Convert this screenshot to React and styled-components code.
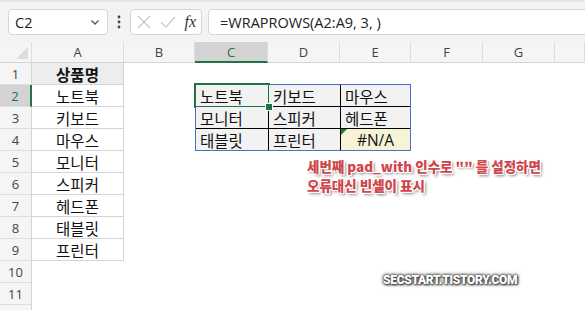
import React from "react";
import styled, { createGlobalStyle } from "styled-components";

const Global = createGlobalStyle`
  html, body { margin: 0; padding: 0; background: #fff; }
  body { width: 585px; height: 310px; overflow: hidden; font-family: "Noto Sans", "Noto Sans CJK KR", sans-serif; }
`;

const Page = styled.div`
  position: relative;
  width: 585px;
  height: 310px;
  overflow: hidden;
  background: #fff;
`;

const Toolbar = styled.div`
  display: flex;
  align-items: center;
  height: 42px;
  box-sizing: border-box;
  padding: 8px 0 8px 8px;
  background: #f3f3f3;
  border-top: 2px solid #e6e6e6;
`;

const Box = styled.div`
  display: flex;
  align-items: center;
  height: 26px;
  box-sizing: border-box;
  background: #fff;
  border: 1px solid #d6d6d6;
  border-radius: 4px;
  width: ${(p) => p.$w || "auto"};
  flex: ${(p) => (p.$grow ? 1 : "none")};
  padding: 0 ${(p) => p.$pad || 6}px;
  margin-right: ${(p) => (p.$grow ? "-20px" : `${p.$mr || 0}px`)};
`;

const NameText = styled.span`
  flex: 1;
  font-family: "Open Sans", sans-serif;
  font-size: 14.5px;
  color: #222;
`;

const FormulaText = styled.span`
  font-family: "Open Sans", sans-serif;
  font-size: 14.5px;
  color: #222;
  padding-left: 5px;
`;

const Dots = styled.div`
  width: 22px;
  display: flex;
  justify-content: center;
`;

const Fx = styled.span`
  font-family: "Liberation Serif", serif;
  font-style: italic;
  font-size: 16px;
  color: #333;
  margin-left: auto;
`;

const Sheet = styled.div`
  display: grid;
  grid-template-columns: 32px 92px 71px 73px 72px 71px 72px 72px 1fr;
  grid-template-rows: 21px repeat(12, 22px);
`;

const ColHead = styled.div`
  grid-row: 1;
  grid-column: ${(p) => p.$c};
  display: flex;
  align-items: center;
  justify-content: center;
  box-sizing: border-box;
  background: ${(p) => (p.$sel ? "#d3d3d3" : "#f5f5f5")};
  border-right: 1px solid #dcdcdc;
  border-bottom: ${(p) => (p.$sel ? "2px solid #217346" : "1px solid #d4d4d4")};
  color: ${(p) => (p.$sel ? "#217346" : "#444")};
  font-family: "Open Sans", sans-serif;
  font-size: 13px;
  position: relative;
`;

const Corner = styled(ColHead)`
  &::after {
    content: "";
    position: absolute;
    right: 3px;
    bottom: 3px;
    border-style: solid;
    border-width: 0 0 12px 12px;
    border-color: transparent transparent #dcdcdc transparent;
  }
`;

const RowHead = styled.div`
  grid-column: 1;
  grid-row: ${(p) => p.$r};
  display: flex;
  align-items: center;
  justify-content: center;
  box-sizing: border-box;
  background: ${(p) => (p.$sel ? "#d3d3d3" : "#f5f5f5")};
  border-bottom: 1px solid #dcdcdc;
  border-right: ${(p) => (p.$sel ? "2px solid #217346" : "1px solid #d4d4d4")};
  color: ${(p) => (p.$sel ? "#217346" : "#444")};
  font-family: "Open Sans", sans-serif;
  font-size: 13px;
`;

const ListBlock = styled.div`
  grid-column: 2;
  grid-row: 2 / 11;
  display: grid;
  grid-template-rows: repeat(9, minmax(0, 1fr));
  gap: 1px;
  background: #d4d4d4;
  border-right: 1px solid #d4d4d4;
  border-bottom: 1px solid #d4d4d4;
  min-height: 0;
`;

const ListCell = styled.div`
  display: flex;
  align-items: center;
  justify-content: center;
  min-height: 0;
  overflow: visible;
  background: ${(p) => (p.$head ? "#ededed" : "#fff")};
  font-family: "Noto Sans CJK KR", sans-serif;
  font-weight: ${(p) => (p.$head ? 700 : 400)};
  font-size: 15.5px;
  line-height: 18px;
  color: #111;
`;

const OutBlock = styled.div`
  grid-column: 4 / 7;
  grid-row: 3 / 6;
  margin-top: -1px;
  min-height: 0;
  display: grid;
  grid-template-columns: 72px 71px 1fr;
  grid-template-rows: repeat(3, minmax(0, 1fr));
  gap: 1px;
  background: #000;
  border: 1px solid #4472c4;
`;

const OutCell = styled.div`
  position: relative;
  display: flex;
  align-items: center;
  min-height: 0;
  justify-content: ${(p) => (p.$err ? "center" : "flex-start")};
  padding-left: ${(p) => (p.$err ? 0 : 4)}px;
  background: ${(p) => (p.$err ? "#f6f3d6" : "#f2f2f2")};
  font-family: ${(p) => (p.$err ? '"Open Sans", sans-serif' : '"Noto Sans CJK KR", sans-serif')};
  font-size: 15.5px;
  line-height: 18px;
  color: #111;
  ${(p) =>
    p.$err &&
    `&::before {
      content: "";
      position: absolute;
      left: 0; top: 0;
      border-style: solid;
      border-width: 6px 6px 0 0;
      border-color: #1e7b34 transparent transparent transparent;
    }`}
  ${(p) =>
    p.$sel &&
    `&::after {
      content: "";
      position: absolute;
      inset: -2px -2px -2px -2px;
      border: 2px solid #217346;
      pointer-events: none;
    }`}
`;

const Handle = styled.span`
  position: absolute;
  right: -5px;
  bottom: -5px;
  width: 6px;
  height: 6px;
  background: #217346;
  border: 1px solid #fff;
  z-index: 2;
`;

const Note = styled.div`
  position: absolute;
  left: 307px;
  top: 157px;
  font-family: "Noto Sans CJK KR", sans-serif;
  font-weight: 800;
  font-size: 13.5px;
  line-height: 19px;
  color: #d0464d;
  white-space: nowrap;
  text-shadow: -1px -1px 0 #fff, 1px -1px 0 #fff, -1px 1px 0 #fff, 1px 1px 0 #fff,
    0 0 2px #fff, 2px 2px 3px rgba(0, 0, 0, 0.55);
`;

const Watermark = styled.div`
  position: absolute;
  left: 383px;
  top: 272px;
  font-family: "Roboto", sans-serif;
  font-weight: 900;
  font-size: 12px;
  letter-spacing: -0.3px;
  line-height: 16px;
  color: #fff;
  text-shadow: 0 0 2px #444, 0 0 3px #444, 0 0 4px #555, 1px 1px 2px #333;
`;

const cols = ["A", "B", "C", "D", "E", "F", "G", ""];
const list = ["상품명", "노트북", "키보드", "마우스", "모니터", "스피커", "헤드폰", "태블릿", "프린터"];
const out = ["노트북", "키보드", "마우스", "모니터", "스피커", "헤드폰", "태블릿", "프린터"];

export default function App() {
  return (
    <Page>
      <Global />
      <Toolbar>
        <Box $w="100px" $mr={0}>
          <NameText>C2</NameText>
          <svg width="12" height="12" viewBox="0 0 12 12">
            <path d="M2.5 4.5 L6 8 L9.5 4.5" fill="none" stroke="#555" strokeWidth="1.3" />
          </svg>
        </Box>
        <Dots>
          <svg width="4" height="14" viewBox="0 0 4 14">
            <circle cx="2" cy="2" r="1.4" fill="#444" />
            <circle cx="2" cy="7" r="1.4" fill="#444" />
            <circle cx="2" cy="12" r="1.4" fill="#444" />
          </svg>
        </Dots>
        <Box $w="72px" $mr={6} $pad={5}>
          <svg width="16" height="16" viewBox="0 0 16 16">
            <path d="M2 2 L14 14 M14 2 L2 14" stroke="#c8c8c8" strokeWidth="1.2" />
          </svg>
          <svg width="18" height="16" viewBox="0 0 18 16" style={{ marginLeft: 7 }}>
            <path d="M2 8.5 L7 13 L16 3" fill="none" stroke="#c8c8c8" strokeWidth="1.2" />
          </svg>
          <Fx>fx</Fx>
        </Box>
        <Box $grow>
          <FormulaText>=WRAPROWS(A2:A9, 3, )</FormulaText>
        </Box>
      </Toolbar>
      <Sheet>
        <Corner $c={1} />
        {cols.map((c, i) => (
          <ColHead key={i} $c={i + 2} $sel={c === "C"}>
            {c}
          </ColHead>
        ))}
        {Array.from({ length: 12 }, (_, i) => (
          <RowHead key={i} $r={i + 2} $sel={i + 1 === 2}>
            {i < 11 ? i + 1 : ""}
          </RowHead>
        ))}
        <ListBlock>
          {list.map((t, i) => (
            <ListCell key={i} $head={i === 0}>
              {t}
            </ListCell>
          ))}
        </ListBlock>
        <OutBlock>
          {out.map((t, i) => (
            <OutCell key={i} $sel={i === 0}>
              {t}
              {i === 0 && <Handle />}
            </OutCell>
          ))}
          <OutCell $err>#N/A</OutCell>
        </OutBlock>
      </Sheet>
      <Note>
        세번째 pad_with 인수로 "" 를 설정하면
        <br />
        오류대신 빈셀이 표시
      </Note>
      <Watermark>SECSTART.TISTORY.COM</Watermark>
    </Page>
  );
}
